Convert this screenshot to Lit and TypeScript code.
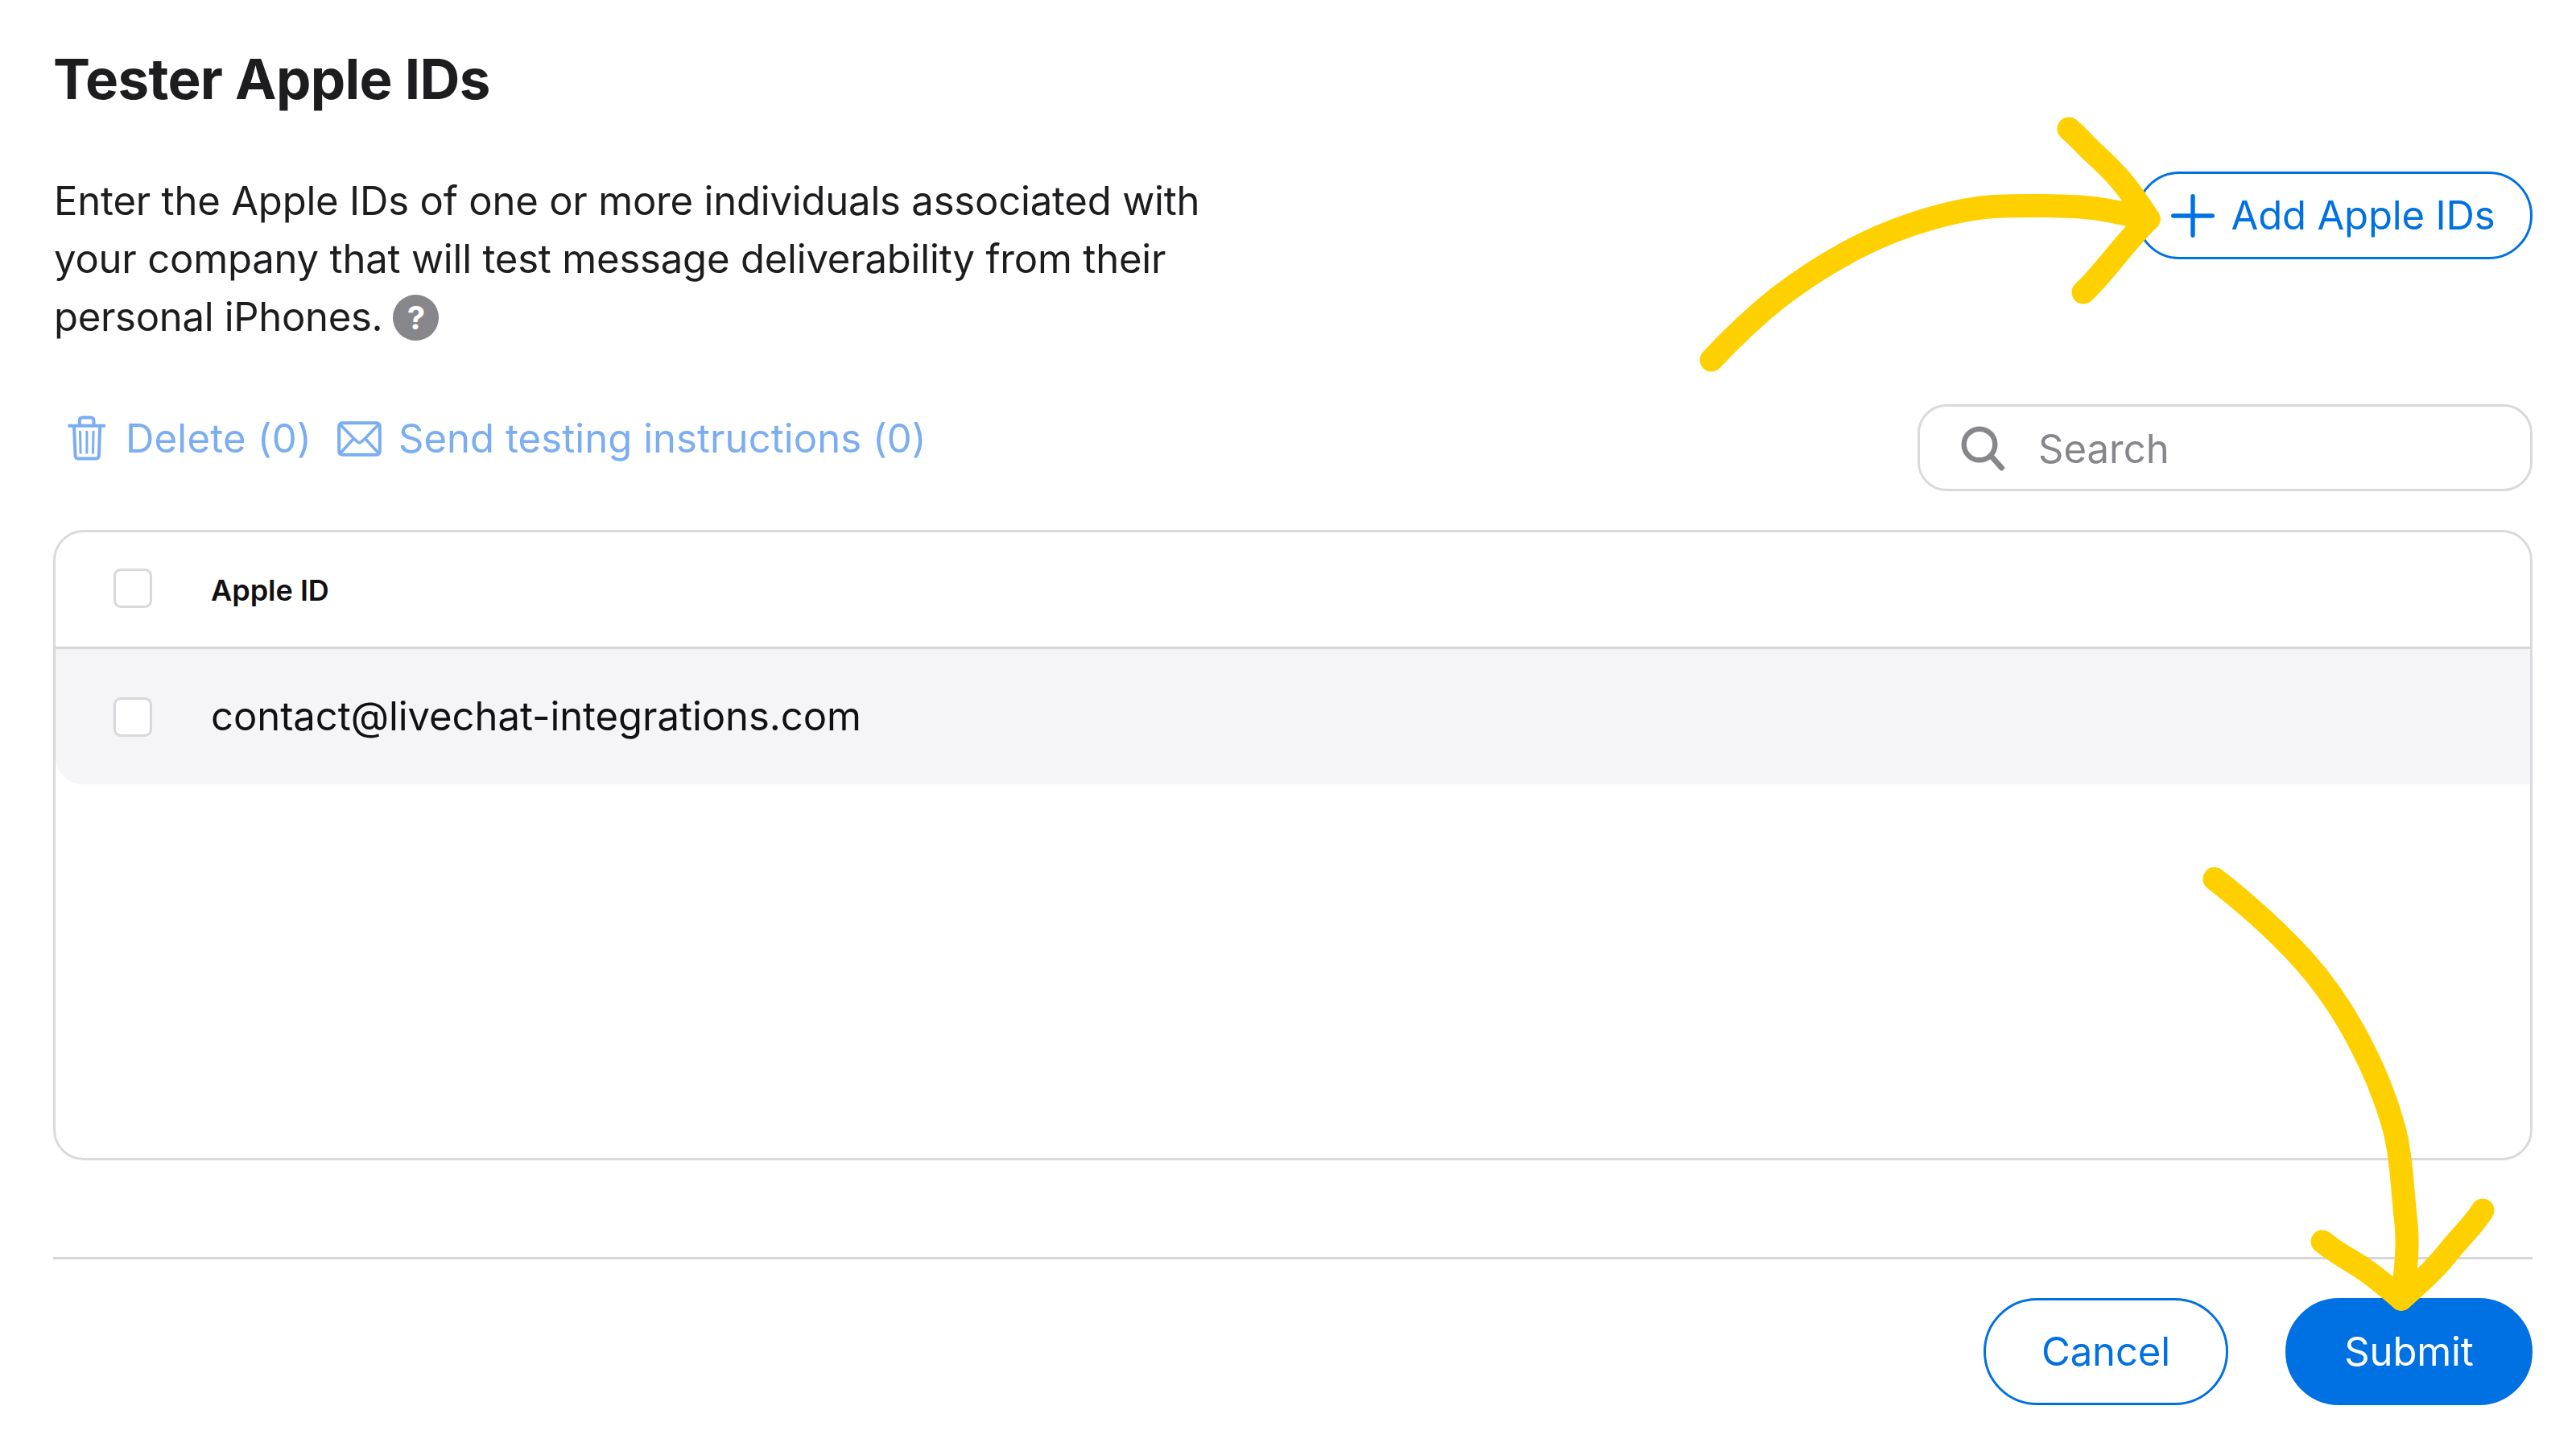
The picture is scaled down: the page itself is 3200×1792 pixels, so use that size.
import { LitElement, css, html, svg } from 'lit'
import { customElement, property, state } from 'lit/decorators.js'

const trashIcon = svg`
  <svg class="icon icon--trash" viewBox="0 0 48 60" fill="none" stroke="currentColor" stroke-width="4">
    <path d="M14.8 14V8.5q0-4 4-4h9.7q4 0 4 4V14" />
    <path d="M0.5 14.7H47" />
    <path d="M8 16l1.6 36q.2 3.5 3.5 3.5h22.3q3.3 0 3.5-3.5L40.2 16" />
    <path stroke-width="3" d="M15.5 21l.6 28.5M23.9 21v28.5M32 21l-.5 28.5" />
  </svg>
`

const mailIcon = svg`
  <svg class="icon icon--mail" viewBox="0 0 55 44" fill="none" stroke="currentColor" stroke-width="4">
    <rect x="2.2" y="2.2" width="50.6" height="39.6" rx="4" />
    <path stroke-width="3.6" d="M4 4.5L20.5 21.5L25.5 26q2 1.8 4 0L34.5 21.5L51 4.5" />
    <path stroke-width="3.6" d="M4 39.5L20.5 21.5M51 39.5L34.5 21.5" />
  </svg>
`

const plusIcon = svg`
  <svg class="icon icon--plus" viewBox="0 0 54 54" fill="none" stroke="currentColor" stroke-width="5.4" stroke-linecap="round">
    <path d="M27 2.7v48.6M2.7 27h48.6" />
  </svg>
`

const searchIcon = svg`
  <svg class="icon icon--search" viewBox="0 0 56 56" fill="none" stroke="currentColor" stroke-linecap="round">
    <circle cx="23" cy="23" r="19.3" stroke-width="6.4" />
    <path d="M37.5 37.5L50.5 52" stroke-width="7" />
  </svg>
`

@customElement('app-checkbox')
export class AppCheckbox extends LitElement {
  static styles = css`
    :host {
      display: block;
      box-sizing: border-box;
      width: 48px;
      height: 49px;
      border: 3px solid #d8d8dd;
      border-radius: 9px;
      background: #fff;
    }
  `

  render (): any {
    return html``
  }
}

@customElement('app-button')
export class AppButton extends LitElement {
  @property({ reflect: true })
    kind = 'outline'

  static styles = css`
    :host {
      display: flex;
      align-items: center;
      justify-content: center;
      box-sizing: border-box;
      border: 3px solid #0071e3;
      border-radius: 70px;
      color: #0071e3;
      white-space: nowrap;
    }

    :host([kind='filled']) {
      background: #0071e3;
      color: #fff;
    }
  `

  render (): any {
    return html`<slot></slot>`
  }
}

@customElement('app-root')
export class AppRoot extends LitElement {
  @state()
    testers = ['contact@livechat-integrations.com']

  @state()
    selected = 0

  static styles = css`
    :host {
      display: block;
      position: relative;
      box-sizing: border-box;
      width: 3200px;
      height: 1792px;
      padding: 56px 54px 0 66px;
      overflow: hidden;
      background: #fff;
      color: #1d1d1f;
      font-family: Inter, sans-serif;
      font-size: 49px;
      line-height: 72px;
    }

    h1 {
      margin: 0 0 73px;
      font-size: 69px;
      font-weight: 700;
      line-height: 84px;
      letter-spacing: -0.0094em;
    }

    .icon {
      display: block;
      flex: none;
    }

    .intro {
      display: flex;
      justify-content: space-between;
      align-items: flex-start;
      height: 289px;
    }

    .intro__text {
      margin: 0;
      padding: 1px 0 0 1px;
      width: 1460px;
      letter-spacing: -0.19px;
      white-space: nowrap;
    }

    .intro__last {
      display: flex;
      align-items: center;
      gap: 13px;
      letter-spacing: -0.3px;
    }

    .help {
      width: 57px;
      height: 57px;
      border-radius: 50%;
      background: #86868b;
      color: #fff;
      font-size: 40px;
      font-weight: 700;
      line-height: 57px;
      text-align: center;
    }

    .add {
      width: 493px;
      height: 109px;
      padding-right: 2px;
      gap: 20px;
      letter-spacing: -0.15px;
    }

    .icon--plus {
      width: 54px;
      height: 54px;
    }

    .toolbar {
      display: flex;
      justify-content: space-between;
      align-items: flex-start;
      height: 108px;
      margin-bottom: 48px;
    }

    .actions {
      display: flex;
      align-items: center;
      gap: 32px;
      padding: 13px 0 0 18px;
      color: #7aadf1;
      line-height: 60px;
      white-space: nowrap;
    }

    .action {
      display: flex;
      align-items: center;
      gap: 24px;
      letter-spacing: 0.2px;
    }

    .action + .action {
      gap: 21px;
      letter-spacing: 0.06px;
    }

    .icon--trash {
      width: 48px;
      height: 60px;
      margin-top: -2px;
    }

    .icon--mail {
      width: 55px;
      height: 44px;
      margin-top: -1px;
    }

    .search {
      display: flex;
      align-items: center;
      gap: 40px;
      box-sizing: border-box;
      width: 764px;
      height: 108px;
      padding: 3px 0 0 51px;
      border: 3px solid #d9d9de;
      border-radius: 36px;
      color: #86868b;
    }

    .icon--search {
      width: 56px;
      height: 56px;
      margin-top: -2px;
    }

    .table {
      box-sizing: border-box;
      height: 783px;
      margin-bottom: 120px;
      border: 3px solid #d9d9de;
      border-radius: 38px;
    }

    .table__head,
    .table__row {
      display: flex;
      align-items: center;
      gap: 73px;
      padding-left: 72px;
    }

    .table__head {
      height: 142px;
      border-bottom: 3px solid #d6d6d9;
      color: #111;
      font-size: 36px;
      font-weight: 600;
    }

    .table__head span {
      padding-top: 2px;
    }

    .table__head app-checkbox {
      margin-bottom: 3px;
    }

    .table__row {
      height: 168px;
      border-bottom-left-radius: 34px;
      background: #f5f5f7;
      color: #111;
      letter-spacing: -0.06px;
    }

    .footer {
      display: flex;
      justify-content: flex-end;
      gap: 71px;
      padding-top: 48px;
      border-top: 3px solid #d6d6db;
    }

    .footer app-button {
      height: 133px;
      letter-spacing: -0.15px;
    }

    .cancel {
      width: 304px;
    }

    .submit {
      width: 307px;
    }

    .pointers {
      position: absolute;
      inset: 0;
      pointer-events: none;
    }
  `

  renderRow (tester: string): any {
    return html`
      <div class="table__row">
        <app-checkbox></app-checkbox>
        <span>${tester}</span>
      </div>
    `
  }

  // Hand drawn arrows that point at the add and submit buttons
  renderPointers (): any {
    return html`
      <svg class="pointers" width="3200" height="1792" viewBox="0 0 3200 1792" fill="none"
        stroke="#ffd000" stroke-width="29" stroke-linecap="round" stroke-linejoin="round">
        <path d="M2126 447C2152 419 2180 393 2207 371C2258 332 2318 297 2377 278C2410 267 2443 259 2476 256.5C2500 255 2550 255 2575 256.5C2602 257.5 2625 262 2669 272" />
        <path d="M2570 160C2582 170 2592 182 2602 191C2626 213 2641 228 2669 272" />
        <path d="M2588 363C2612 341 2636 305 2669 272" />
        <path d="M2751 1091.5C2789 1121 2828 1155 2863 1194C2911 1248 2953 1325 2974 1401C2983 1436 2984 1474 2989 1520C2992 1550 2989 1580 2983 1613" />
        <path d="M2885 1542C2905 1558 2922 1566 2938 1577C2954 1588 2966 1599 2983 1613" />
        <path d="M3084 1503C3074 1520 3058 1534 3043 1553C3024 1577 3010 1589 2983 1613" />
      </svg>
    `
  }

  render (): any {
    return html`
      <h1>Tester Apple IDs</h1>
      <div class="intro">
        <div class="intro__text">
          <div>Enter the Apple IDs of one or more individuals associated with</div>
          <div>your company that will test message deliverability from their</div>
          <div class="intro__last"><span>personal iPhones.</span><span class="help">?</span></div>
        </div>
        <app-button class="add">${plusIcon}<span>Add Apple IDs</span></app-button>
      </div>
      <div class="toolbar">
        <div class="actions">
          <div class="action">${trashIcon}<span>Delete (${this.selected})</span></div>
          <div class="action">${mailIcon}<span>Send testing instructions (${this.selected})</span></div>
        </div>
        <div class="search">${searchIcon}<span>Search</span></div>
      </div>
      <div class="table">
        <div class="table__head">
          <app-checkbox></app-checkbox>
          <span>Apple ID</span>
        </div>
        ${this.testers.map((tester) => this.renderRow(tester))}
      </div>
      <div class="footer">
        <app-button class="cancel">Cancel</app-button>
        <app-button class="submit" kind="filled">Submit</app-button>
      </div>
      ${this.renderPointers()}
    `
  }
}
